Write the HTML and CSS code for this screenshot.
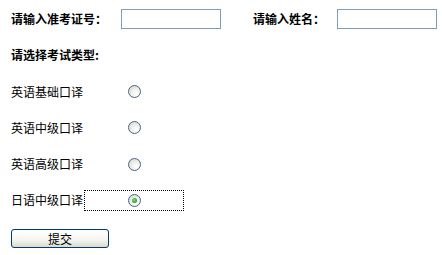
FILE: index.html
```html
<!DOCTYPE html>
<html lang="zh-CN">
<head>
<meta charset="utf-8">
<title>考试报名</title>
<link rel="stylesheet" href="styles.css">
</head>
<body>
<form class="form">
  <div class="top">
    <label class="lbl lbl-id" for="zkz">请输入准考证号：</label>
    <input class="txt" id="zkz" type="text">
    <label class="lbl lbl-name" for="xm">请输入姓名：</label>
    <input class="txt" id="xm" type="text">
  </div>
  <div class="title">请选择考试类型:</div>
  <div class="opts">
    <span class="opt">英语基础口译</span>
    <span class="cell"><input class="radio" type="radio" name="t"></span>
    <span class="opt">英语中级口译</span>
    <span class="cell"><input class="radio" type="radio" name="t"></span>
    <span class="opt">英语高级口译</span>
    <span class="cell"><input class="radio" type="radio" name="t"></span>
    <span class="opt">日语中级口译</span>
    <span class="cell focus"><input class="radio" type="radio" name="t" checked></span>
  </div>
  <button class="btn" type="button">提交</button>
</form>
</body>
</html>
```
FILE: styles.css
```css
html, body {
  margin: 0;
  padding: 0;
  background: #ffffff;
}
body {
  font-family: "Noto Sans CJK SC", "Liberation Sans", sans-serif;
  font-size: 12px;
  color: #000000;
}
.form {
  padding-left: 11px;
}
.top {
  display: flex;
  align-items: center;
  height: 20px;
  padding-top: 9px;
}
.lbl {
  font-weight: bold;
  line-height: 16px;
}
.lbl-id { width: 110px; }
.lbl-name { width: 84px; margin-left: 32px; }
.txt {
  box-sizing: border-box;
  width: 100px;
  height: 20px;
  margin: 0;
  padding: 0 2px;
  border: 1px solid #7f9db9;
  background: #ffffff;
  font: inherit;
  outline: none;
}
.title {
  font-weight: bold;
  line-height: 16px;
  margin-top: 18px;
}
.opts {
  display: grid;
  grid-template-columns: 73px 100px;
  grid-template-rows: 35px 37px 36px 36px;
  align-items: center;
  margin-top: 11px;
}
.opt {
  line-height: 16px;
}
.cell {
  box-sizing: border-box;
  height: 21px;
  display: flex;
  align-items: center;
  justify-content: center;
  border: 1px dotted transparent;
}
.cell.focus {
  border-color: #000000;
}
.radio {
  -webkit-appearance: none;
  appearance: none;
  box-sizing: border-box;
  width: 13px;
  height: 13px;
  margin: 0;
  border: 1px solid #4a6482;
  border-radius: 50%;
  background: radial-gradient(circle at 65% 70%, #ffffff 0%, #eeeeea 45%, #d2d2cc 100%);
  position: relative;
}
.radio:checked::after {
  content: "";
  position: absolute;
  left: 3px;
  top: 3px;
  width: 5px;
  height: 5px;
  border-radius: 50%;
  background: radial-gradient(circle at 40% 40%, #7ee07e 0%, #21a121 70%);
}
.btn {
  display: block;
  box-sizing: border-box;
  width: 98px;
  height: 19px;
  margin-top: 11px;
  padding: 0;
  border: 1px solid #003c74;
  border-radius: 3px;
  background: linear-gradient(#ffffff 0%, #f4f4f0 60%, #dcd9cc 100%);
  font-family: "Noto Sans CJK SC", "Liberation Sans", sans-serif;
  font-size: 12px;
  line-height: 16px;
  color: #000000;
}
```
